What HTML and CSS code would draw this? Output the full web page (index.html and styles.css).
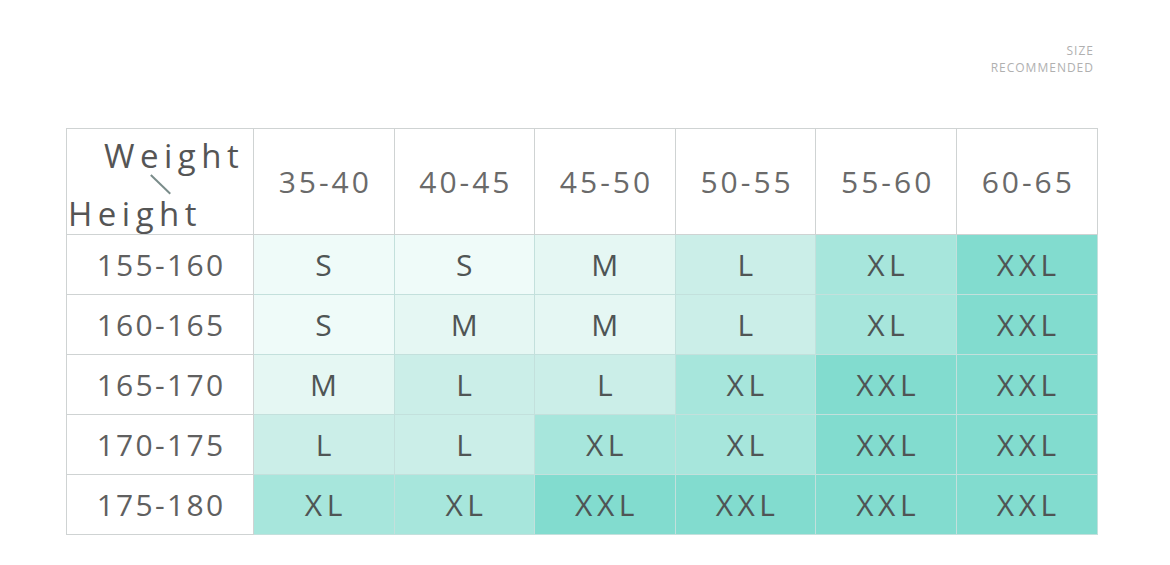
FILE: index.html
```html
<!DOCTYPE html>
<html>
<head>
<meta charset="utf-8">
<link rel="stylesheet" href="styles.css">
</head>
<body>
<div class="page">
  <div class="tag">
    <div>SIZE</div>
    <div>RECOMMENDED</div>
  </div>
  <table class="chart">
    <colgroup>
      <col class="c-first">
      <col class="c"><col class="c"><col class="c"><col class="c"><col class="c"><col class="c">
    </colgroup>
    <tr class="head">
      <th class="corner">
        <div class="corner-in">
          <span class="w">Weight</span>
          <span class="slash"></span>
          <span class="h">Height</span>
        </div>
      </th>
      <th>35-40</th><th>40-45</th><th>45-50</th><th>50-55</th><th>55-60</th><th>60-65</th>
    </tr>
    <tr>
      <td class="rh">155-160</td>
      <td class="s">S</td><td class="s">S</td><td class="m">M</td><td class="l">L</td><td class="xl">XL</td><td class="xxl">XXL</td>
    </tr>
    <tr>
      <td class="rh">160-165</td>
      <td class="s">S</td><td class="m">M</td><td class="m">M</td><td class="l">L</td><td class="xl">XL</td><td class="xxl">XXL</td>
    </tr>
    <tr>
      <td class="rh">165-170</td>
      <td class="m">M</td><td class="l">L</td><td class="l">L</td><td class="xl">XL</td><td class="xxl">XXL</td><td class="xxl">XXL</td>
    </tr>
    <tr>
      <td class="rh">170-175</td>
      <td class="l">L</td><td class="l">L</td><td class="xl">XL</td><td class="xl">XL</td><td class="xxl">XXL</td><td class="xxl">XXL</td>
    </tr>
    <tr>
      <td class="rh">175-180</td>
      <td class="xl">XL</td><td class="xl">XL</td><td class="xxl">XXL</td><td class="xxl">XXL</td><td class="xxl">XXL</td><td class="xxl">XXL</td>
    </tr>
  </table>
</div>
</body>
</html>
```
FILE: styles.css
```css
html, body {
  margin: 0;
  padding: 0;
  background: #ffffff;
}
.page {
  width: 1170px;
  height: 565px;
  padding: 42px 0 0 66px;
  box-sizing: border-box;
  font-family: "Open Sans", "Noto Sans", sans-serif;
}
.tag {
  width: 1028px;
  text-align: right;
  font-size: 12px;
  line-height: 17px;
  color: #b0b0b0;
  letter-spacing: 1px;
  height: 86px;
}
.chart {
  border-collapse: collapse;
  table-layout: fixed;
  width: 1031px;
}
.c-first { width: 187px; }
.c { width: 140.6px; }
.chart th, .chart td {
  border: 1px solid #cfd3d3;
  text-align: center;
  padding: 0;
  font-weight: 400;
}
.chart th {
  height: 105px;
  font-size: 30px;
  color: #6a6a6a;
  letter-spacing: 3px;
  padding-left: 3px;
  background: #fff;
}
.chart th.corner {
  padding-left: 0;
  text-align: left;
}
.corner-in {
  position: relative;
  height: 105px;
}
.corner-in .w {
  position: absolute;
  left: 37px;
  top: 4px;
  font-size: 33px;
  letter-spacing: 5.5px;
  color: #555;
}
.corner-in .h {
  position: absolute;
  left: 1px;
  top: 62px;
  font-size: 33px;
  letter-spacing: 5.5px;
  color: #555;
}
.corner-in .slash {
  position: absolute;
  left: 84px;
  top: 45px;
  width: 27px;
  height: 1.5px;
  background: #7a8c8a;
  transform: rotate(44deg);
  transform-origin: left center;
}
.chart td {
  height: 59px;
  font-size: 30px;
  color: #4f5555;
  letter-spacing: 4.5px;
  padding-left: 4px;
  border-color: #c3e0dc;
}
.chart td.rh {
  background: #fff;
  color: #606060;
  letter-spacing: 2.3px;
  padding-left: 2px;
  border-color: #cfd3d3;
}
.chart td.s { background: #effbf9; }
.chart td.m { background: #e5f7f3; }
.chart td.l { background: #cbeee8; }
.chart td.xl { background: #a7e6dc; }
.chart td.xxl { background: #82dccf; }
```
